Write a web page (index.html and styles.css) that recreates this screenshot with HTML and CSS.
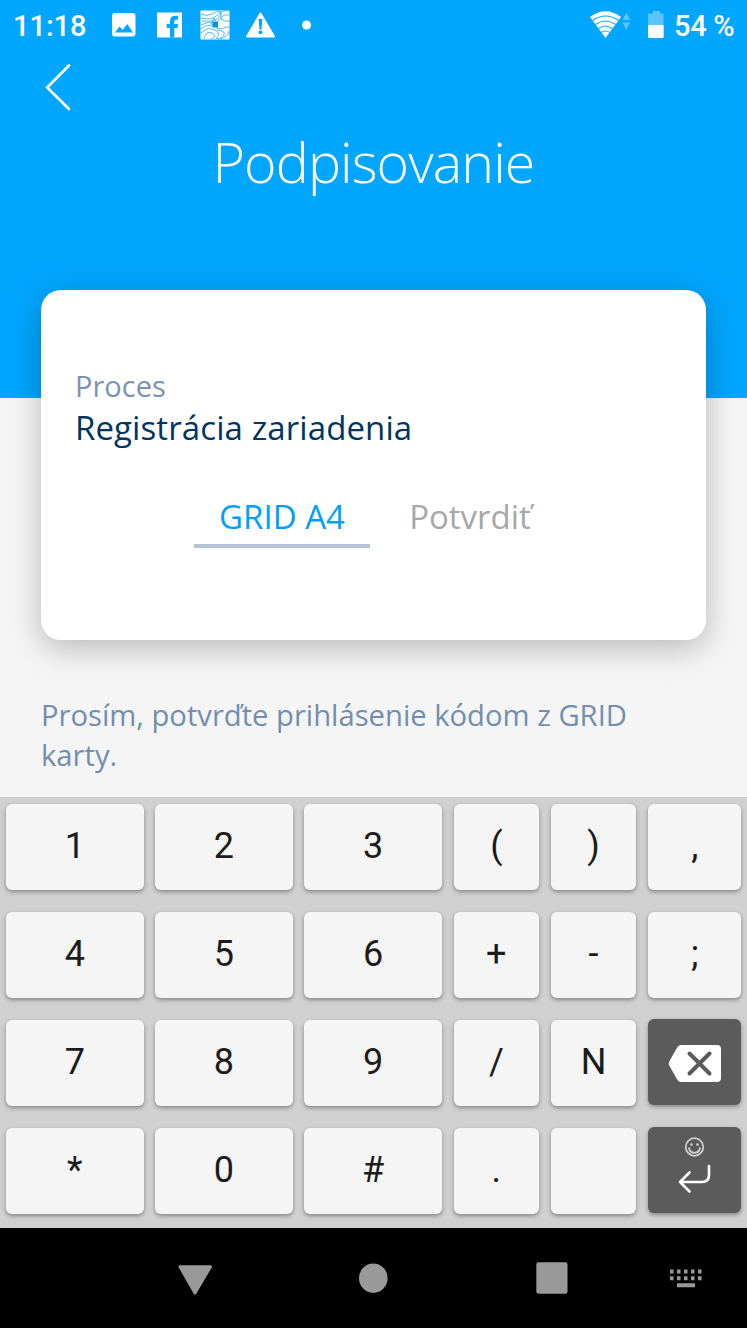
FILE: index.html
```html
<!DOCTYPE html>
<html lang="sk">
<head>
<meta charset="utf-8">
<title>Podpisovanie</title>
<link rel="stylesheet" href="styles.css">
</head>
<body>
<div class="screen">
  <header class="header">
    <div class="status">
      <span class="time">11:18</span>
      <svg class="status-icons" width="210" height="50" viewBox="0 0 210 50">
        <path fill="#fff" fill-rule="evenodd" d="M5 13h17.500q3 0 3 3v17.500q0 3-3 3H5q-3 0-3-3V16q0-3 3-3zM5 32.500h18l-5.800-8.500-4.500 6-3.200-3.600z"/>
        <path fill="#fff" d="M47 12.500h25v25H47z"/>
        <path fill="#00a6ff" d="M60 37.500v-9.500h-3.300v-4H60v-2.500q0-5.800 5.500-5.800H68v4h-2q-1.700 0-1.700 1.800V24H68l-.5 4h-3.200v9.500z"/>
        <rect x="90.500" y="10.500" width="29" height="29" fill="#fff"/>
        <g fill="none" stroke="#4dbcfc" stroke-width="1">
          <path d="M91 14q6 3 11 0t8-3M91 18q10 2 14-1t6-6M92 21q11 1 15-2t4-8M91 25q8-4 15-3 5-1 5-7t9-4M119 15q-7-1-8 4 4 3 9 2M91 29q5-5 12-3M91 33q7-7 13-3 8 2 2 9M94 39q2-9 8-6t-1 6M106 28q7 2 9-1l4 0M107 30q9 1 7 5t-7 4M110 39q8-2 9-8"/>
          <path d="M101 25l3-7 3 6"/>
        </g>
        <rect x="102.500" y="22" width="5.500" height="5.500" fill="#0093e8"/>
        <path fill="#fff" stroke="#fff" stroke-width="2" stroke-linejoin="round" d="M150.500 13.500L164 36.500h-27z"/>
        <path fill="#00a6ff" d="M148.700 19h3.600l-.8 10.500h-2z"/><circle cx="150.500" cy="32.300" r="1.900" fill="#00a6ff"/>
        <circle cx="196.500" cy="25" r="4.500" fill="#fff"/>
      </svg>
      <svg class="status-right" width="80" height="50" viewBox="0 0 80 50">
        <path fill="#fff" d="M0 17Q15.500 5.500 31 17L15.500 38z"/>
        <g fill="none" stroke="#00a6ff" stroke-width="1.200"><path d="M2.500 20.500q13-9 26 0M5.500 24.500q10-7 20 0M8.500 28.500q7-5 14 0M11 32.500q4.500-3 9 0"/></g>
        <path fill="#59c4ff" d="M32.500 20l4-7.500 3.700 7.500zM32.500 22.500h7.700l-4 7.500z"/>
        <path fill="#59c4ff" d="M59 13.500h4V11h7v2.500h3.500V25H58V14.500z"/>
        <path fill="#fff" d="M58 25h15.700v11.500q0 1.500-1.500 1.500H59.500q-1.500 0-1.500-1.500z"/>
      </svg>
      <span class="battery">54 %</span>
    </div>
    <svg class="back" width="28" height="50" viewBox="0 0 28 50"><path d="M25 4.500L3.200 26.500 25 48" fill="none" stroke="#fff" stroke-width="2.700" stroke-linecap="round"/></svg>
    <h1 class="title">Podpisovanie</h1>
  </header>
  <main class="content">
    <section class="card">
      <div class="label">Proces</div>
      <div class="value">Registrácia zariadenia</div>
      <div class="tabs">
        <div class="tab active">GRID A4</div>
        <div class="tab confirm">Potvrdiť</div>
      </div>
    </section>
    <p class="hint">Prosím, potvrďte prihlásenie kódom z GRID<br>karty.</p>
  </main>
  <div class="keyboard">
    <div class="key">1</div><div class="key">2</div><div class="key">3</div><div class="key">(</div><div class="key">)</div><div class="key">,</div>
    <div class="key">4</div><div class="key">5</div><div class="key">6</div><div class="key">+</div><div class="key">-</div><div class="key">;</div>
    <div class="key">7</div><div class="key">8</div><div class="key">9</div><div class="key">/</div><div class="key">N</div>
    <div class="key dark"><svg width="94" height="86" viewBox="0 0 94 86"><path fill="#fff" d="M33 26H69q4 0 4 4V59q0 4-4 4H33q-2 0-3.500-2L21.500 47q-1.500-2.500 0-5L29.500 28q1.500-2 3.500-2z"/><path d="M41.500 34.500l20 20M61.500 34.500l-20 20" stroke="#5b5b5b" stroke-width="4" stroke-linecap="round"/></svg></div>
    <div class="key">*</div><div class="key">0</div><div class="key">#</div><div class="key">.</div><div class="key"></div>
    <div class="key dark"><svg width="94" height="86" viewBox="0 0 94 86"><g fill="none" stroke="#d2d2d2" stroke-width="1.700"><circle cx="46.500" cy="20" r="8.800"/><path d="M41 21q.8 4.800 5.500 4.800T52 21" stroke-linecap="round"/></g><circle cx="43.500" cy="17.500" r="1.300" fill="#d2d2d2"/><circle cx="49.500" cy="17.500" r="1.300" fill="#d2d2d2"/><path d="M61 39v9q0 7-7 7H32M41.500 45.500L32 55l9.500 9.500" fill="none" stroke="#fff" stroke-width="2.600" stroke-linecap="round" stroke-linejoin="round"/></svg></div>
  </div>
  <nav class="navbar">
    <svg width="747" height="100" viewBox="0 0 747 100" fill="#999">
      <path stroke="#999" stroke-width="3" stroke-linejoin="round" d="M180 38.700h30.500L195 65z"/>
      <ellipse cx="373.300" cy="50.200" rx="14.300" ry="14.700"/>
      <rect x="536.300" y="34.300" width="31.200" height="31.500" rx="2.500"/>
      <path d="M670 41.500h3.500v4H670zM677 41.500h3.500v4H677zM684 41.500h3.500v4H684zM691 41.500h3.500v4H691zM698 41.500h3.500v4H698zM670 48.300h3.500v4H670zM677 48.300h3.500v4H677zM684 48.300h3.500v4H684zM691 48.300h3.500v4H691zM698 48.300h3.500v4H698zM677 55.300h18v4H677z"/>
    </svg>
  </nav>
</div>
</body>
</html>
```
FILE: styles.css
```css
* { box-sizing: border-box; }
body { margin: 0; font-family: "Open Sans", "Noto Sans", sans-serif; }
.screen { width: 747px; height: 1328px; background: #f5f5f5; display: flex; flex-direction: column; overflow: hidden; }
.header { height: 398px; flex: none; background: #00a6ff; color: #fff; }
.status { height: 50px; display: flex; align-items: center; font: 500 29px/50px Roboto, sans-serif; white-space: nowrap; }
.time { width: 100px; margin-left: 13px; padding-top: 2px; margin-right: -3px; }
.status-right { margin-left: 270px; }
.battery { margin-left: 4px; padding-top: 2px; letter-spacing: -.3px; }
.back { display: block; margin: 11px 0 0 44px; }
.title { margin: 13px 0 0; text-align: center; font-size: 55.5px; line-height: 76px; font-weight: 300; letter-spacing: -.9px; }
.content { height: 399px; flex: none; padding: 0 41px; }
.card { height: 350px; margin-top: -108px; padding: 76px 34px 0; background: #fff; border-radius: 20px; box-shadow: 0 8px 32px rgba(0,0,0,.25); position: relative; }
.label { font-size: 29px; line-height: 40px; color: #7a93b4; }
.value { font-size: 33px; line-height: 44px; color: #00355f; white-space: nowrap; letter-spacing: .1px; }
.tabs { display: flex; margin: 40px 0 0 119px; gap: 22px; }
.tab { width: 176px; height: 58px; text-align: center; font-size: 33px; line-height: 53px; color: #a8a8a8; }
.active { color: #00a0fa; border-bottom: 4px solid #b5c3d3; }
.confirm { width: 156px; }
.hint { margin: 55px 0 0; font-size: 29.200px; line-height: 40px; color: #728eb0; white-space: nowrap; }
.keyboard { height: 431px; flex: none; background: #d0d0d0; padding: 7px 5px 0 6px; display: grid; grid-template-columns: 137.500px 137.500px 137.500px 85.500px 85.500px 93.500px; grid-template-rows: repeat(4, 86px); gap: 22px 11.700px; }
.key { background: #f5f5f5; color: #1c1c1c; border-radius: 6px; box-shadow: 0 2px 4px rgba(0,0,0,.35); font: 400 36px/84px Roboto, sans-serif; text-align: center; }
.dark { background: #5b5b5b; margin-top: -1px; margin-bottom: 1px; }
.dark svg { display: block; }
.navbar { height: 100px; flex: none; background: #000; }
.navbar svg { display: block; }
```
